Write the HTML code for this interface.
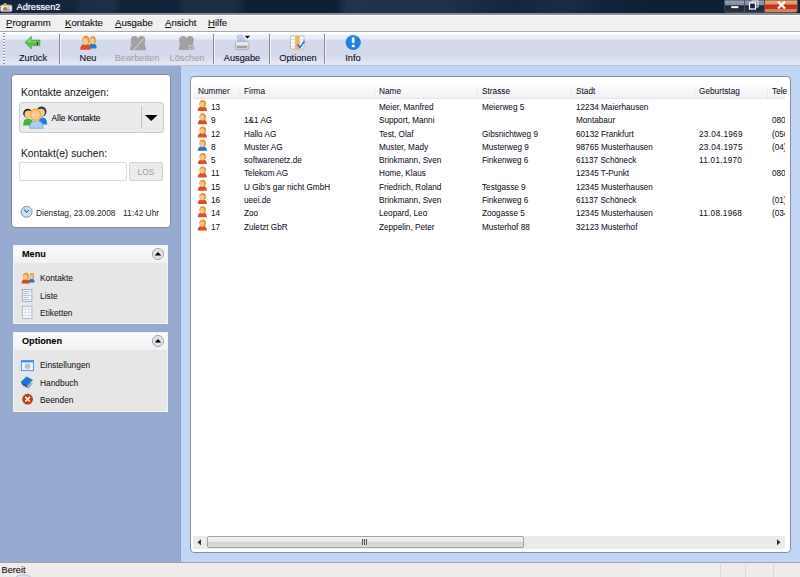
<!DOCTYPE html>
<html><head><meta charset="utf-8">
<style>
*{margin:0;padding:0;box-sizing:border-box}
html,body{width:800px;height:577px;overflow:hidden;background:#97abd0;font-family:"Liberation Sans",sans-serif;color:#000;position:relative}
.a{position:absolute;white-space:nowrap;-webkit-text-stroke-width:0.12px}
svg.a{overflow:visible}
.t{transform-origin:0 0}
#title{left:0;top:0;width:800px;height:13px;background:linear-gradient(96deg,#13233a 0px,#14243b 75px,#1d2d45 82px,#1f2f47 112px,#13233a 122px,#12223a 176px,#1d2d43 184px,#1c2c42 236px,#0f1f36 246px,#0f1f36 334px,#23334b 346px,#20304a 450px,#1b2b43 470px,#15253d 515px,#1c2c44 560px,#13233b 600px,#0f1f36 650px,#0f1f36 800px)}
.mi{font-size:9.6px;color:#141414}
.mi u{text-decoration:underline;text-underline-offset:0.5px}
.tt{font-size:9.6px;color:#10101e;transform:scaleX(0.96);transform-origin:50% 0}
.dis{color:#a6a6a8}
.sep{top:34px;width:2px;height:30px;border-left:1px solid #868a96;border-right:1px solid #f2f4f9}
.lbl{font-size:10.25px;color:#1a1a1a;-webkit-text-stroke-width:0.05px}
.sbt{font-size:9.8px;font-weight:bold;color:#000;transform:scaleX(0.93);transform-origin:0 0;-webkit-text-stroke-width:0.1px}
.si{font-size:8.8px;color:#141414;-webkit-text-stroke-width:0.05px;transform:scaleX(0.95);transform-origin:0 0}
.hd{font-size:8.9px;color:#10101e;-webkit-text-stroke-width:0.05px}
.cell{font-size:8.8px;color:#10101e;-webkit-text-stroke-width:0.05px}
</style></head><body>
<div id="title" class="a"></div>
<div class="a" style="left:0;top:13px;width:800px;height:2px;background:#8a8e94"></div>
<svg class="a" style="left:0;top:2px" width="13" height="10" viewBox="0 0 13 10"><rect x="0.4" y="3" width="11.6" height="6.6" rx="1.5" fill="#d8d8dc" stroke="#a4a4aa" stroke-width="0.7"/><rect x="1.5" y="4" width="9.4" height="4.6" fill="#ececf0"/><circle cx="5.2" cy="2.6" r="1.7" fill="#e8a848"/><path d="M3 8.5 Q3 5 5.2 5 Q7.4 5 7.4 8.5 Z" fill="#c06a38"/><circle cx="8.5" cy="4.8" r="1.3" fill="#f0c070"/><path d="M7 8.6 Q7 6.4 8.5 6.4 Q10 6.4 10 8.6 Z" fill="#6a98d0"/><circle cx="5.6" cy="5.8" r="0.8" fill="#40a840"/></svg>
<div class="a" style="left:16.5px;top:2px;font-size:9.2px;color:#fff;text-shadow:0 0 2px rgba(170,200,255,.5)">Adressen2</div>
<svg class="a" style="left:724px;top:0" width="76" height="14" viewBox="0 0 76 14">
<defs><linearGradient id="gmin" x1="0" y1="0" x2="0" y2="1"><stop offset="0" stop-color="#9aa4b4"/><stop offset="0.42" stop-color="#7e8a9c"/><stop offset="0.45" stop-color="#1c2638"/><stop offset="1" stop-color="#283448"/></linearGradient>
<linearGradient id="gcls" x1="0" y1="0" x2="0" y2="1"><stop offset="0" stop-color="#e8b088"/><stop offset="0.35" stop-color="#d89060"/><stop offset="0.38" stop-color="#c42c1c"/><stop offset="0.72" stop-color="#c83420"/><stop offset="0.76" stop-color="#d08058"/><stop offset="1" stop-color="#c88a70"/></linearGradient></defs>
<path d="M0.5 0 V10 Q0.5 12.5 3 12.5 H40.5 V0 Z" fill="url(#gmin)" stroke="#3c4658" stroke-width="1"/>
<line x1="20.5" y1="0" x2="20.5" y2="12" stroke="#4a5466" stroke-width="1"/>
<path d="M40.5 0 V12.5 H71 Q73.5 12.5 73.5 10 V0 Z" fill="url(#gcls)" stroke="#6a4a40" stroke-width="1"/>
<rect x="7" y="6" width="7.5" height="2.2" fill="#fff" stroke="#30384a" stroke-width="0.4"/>
<rect x="28" y="1" width="6" height="6" fill="none" stroke="#e8ecf4" stroke-width="1"/>
<rect x="25.5" y="3" width="6" height="6" fill="#1c2638" stroke="#fff" stroke-width="1.2"/>
<path d="M54 1.5 L61 8.5 M61 1.5 L54 8.5" stroke="#fff" stroke-width="2.2"/>
</svg>
<div class="a" style="left:0;top:15px;width:800px;height:1px;background:#fdfdfd"></div>
<div class="a" style="left:0;top:16px;width:800px;height:15px;background:#f0f0f0"></div>
<div class="a" style="left:0;top:31px;width:800px;height:1px;background:#a8aaac"></div>
<div class="a mi" style="left:6px;top:16.6px"><u>P</u>rogramm</div>
<div class="a mi" style="left:65px;top:16.6px"><u>K</u>ontakte</div>
<div class="a mi" style="left:115px;top:16.6px"><u>A</u>usgabe</div>
<div class="a mi" style="left:165px;top:16.6px"><u>A</u>nsicht</div>
<div class="a mi" style="left:208px;top:16.6px"><u>H</u>ilfe</div>
<div class="a" style="left:0;top:32px;width:800px;height:34px;background:linear-gradient(#ffffff 0px,#fdfdfe 2px,#ecf1f9 3px,#e6ecf7 6.8px,#d4d9ec 8.5px,#d3d8eb 23px,#dde1f0 28px,#e4e7f3 32px)"></div>
<div class="a" style="left:0;top:65px;width:800px;height:1px;background:#bfc6da"></div>
<div class="a" style="left:3px;top:33px;width:2px;height:31px;background:repeating-linear-gradient(#8a92a6 0 1px,#fff 1px 2px,transparent 2px 3px)"></div>
<div class="a sep" style="left:59px"></div>
<div class="a sep" style="left:213px"></div>
<div class="a sep" style="left:269px"></div>
<div class="a sep" style="left:324px"></div>
<svg class="a" style="left:24px;top:35px" width="17" height="15" viewBox="24 35 17 15"><path d="M24.9 42.4 L31.4 36.2 L31.4 40 L39.9 40 L39.9 45.7 L31.4 45.7 L31.4 49 Z" fill="#58be4c" stroke="#3c9a34" stroke-width="0.5"/><path d="M26.5 42.2 L31 38 L31 41 L36 41 L36 42.6 Z" fill="#8ed882" opacity="0.7"/><rect x="36.8" y="42.6" width="1.2" height="2.2" fill="#201818"/></svg>
<svg class="a" style="left:0;top:0" width="800" height="577" viewBox="0 0 800 577"><path d="M88.50 47.90 C88.50 45.43 90.28 42.97 92.55 42.97 C94.82 42.97 96.60 45.43 96.60 47.90 Q96.60 48.50 95.80 48.50 H89.30 Q88.50 48.50 88.50 47.90 Z" fill="#1c7ad6"/><ellipse cx="92.87" cy="40.26" rx="2.92" ry="4.06" fill="#e09a2c"/><ellipse cx="92.39" cy="41.15" rx="2.04" ry="3.04" fill="#f8c68a"/><path d="M80.20 49.10 C80.20 46.23 82.53 43.45 85.50 43.45 C88.47 43.45 90.80 46.23 90.80 49.10 Q90.80 49.70 90.00 49.70 H81.00 Q80.20 49.70 80.20 49.10 Z" fill="#dc5028"/><ellipse cx="85.92" cy="40.39" rx="3.82" ry="4.59" fill="#e09a2c"/><ellipse cx="85.29" cy="41.40" rx="2.67" ry="3.44" fill="#f8c68a"/><g fill="#a2a2a4"><circle cx="134.5" cy="39.5" r="3.6"/><circle cx="141.5" cy="39.5" r="3.4"/><path d="M130 50.2 Q130 43 134.5 43 Q138 43 138 44 Q138 43 141.5 43 Q146 43 146 50.2 Z"/><rect x="131" y="38" width="14" height="6"/></g><path d="M133.5 50 L143.5 39" stroke="#d4d8e4" stroke-width="1"/><g fill="#a2a2a4"><circle cx="183" cy="39.5" r="3.6"/><circle cx="190" cy="39.5" r="3.4"/><path d="M178.7 50 Q178.7 43 183 43 Q187 43 187 44 Q187 43 190 43 Q194.5 43 194.5 50 Z"/><rect x="179.5" y="38" width="14" height="6"/></g><path d="M189 45 L194 50 M194 45 L189 50" stroke="#d6dae6" stroke-width="1.6"/><path d="M189.5 45.5 L193.5 49.5 M193.5 45.5 L189.5 49.5" stroke="#8a8a8c" stroke-width="0.8"/><path d="M236.8 36.2 L241.8 35.2 L244.6 40.6 L239.2 41.2 Z" fill="#d4e4f8" stroke="#7ea8dc" stroke-width="0.7"/><path d="M238.5 37.5 L241.5 37 L243 40 L240 40.3 Z" fill="#a8c8f0"/><path d="M235.4 44 Q235.4 41 238.5 41 H246 Q249 41 249 44 V47.5 Q249 49.7 246.5 49.7 H238 Q235.4 49.7 235.4 47.5 Z" fill="#d0d0d2" stroke="#9a9a9c" stroke-width="0.6"/><path d="M236 42.5 H248.4 V44.6 H236 Z" fill="#eeeeee"/><rect x="237" y="46.4" width="10" height="1.3" fill="#8a8a8e"/><path d="M244.7 35.8 H250.1 L247.4 38.6 Z" fill="#000"/><rect x="290.5" y="36" width="13.5" height="13" fill="#fbfbfb" stroke="#a8a8a8" stroke-width="0.7"/><rect x="295.2" y="36" width="4.7" height="13.2" fill="#f6b050"/><path d="M290.5 39.5 H304 M290.5 43 H304 M290.5 46.5 H304 M295 36 V49 M299.5 36 V49" stroke="#c8c8c8" stroke-width="0.5"/><path d="M297.5 44.5 L300 47.5 L304.5 41" stroke="#2a78d0" stroke-width="1.5" fill="none"/><circle cx="353.2" cy="42.5" r="7.6" fill="#1e80dc"/><path d="M349 36.5 Q353 35 357.5 36.5" stroke="#6cb0f0" stroke-width="1" fill="none" opacity="0.6"/><rect x="351.8" y="37.5" width="2.8" height="5.5" fill="#fff"/><rect x="351.8" y="44.8" width="2.8" height="2.4" fill="#fff"/></svg>
<div class="a tt" style="left:-7.399999999999999px;width:80px;text-align:center;top:52px">Zurück</div>
<div class="a tt" style="left:48.099999999999994px;width:80px;text-align:center;top:52px">Neu</div>
<div class="a tt dis" style="left:97px;width:80px;text-align:center;top:52px">Bearbeiten</div>
<div class="a tt dis" style="left:146.5px;width:80px;text-align:center;top:52px">Löschen</div>
<div class="a tt" style="left:202.3px;width:80px;text-align:center;top:52px">Ausgabe</div>
<div class="a tt" style="left:257.6px;width:80px;text-align:center;top:52px">Optionen</div>
<div class="a tt" style="left:312.8px;width:80px;text-align:center;top:52px">Info</div>
<div class="a" style="left:180px;top:66px;width:1px;height:496px;background:#8ea4cc"></div>
<div class="a" style="left:181px;top:66px;width:619px;height:496px;background:#c1d5f5"></div>
<div class="a" style="left:11px;top:74px;width:160px;height:154px;background:#fff;border:1px solid #888c92;border-radius:4px"></div>
<div class="a lbl" style="left:21px;top:86.5px">Kontakte anzeigen:</div>
<div class="a" style="left:19px;top:102px;width:144.5px;height:30.5px;background:#ebebeb;border:1px solid #cdcdcd;border-radius:3px"></div>
<div class="a" style="left:140.5px;top:106px;width:1px;height:23px;background:#c4c4c4"></div>
<svg class="a" style="left:145px;top:115px" width="13" height="6" viewBox="0 0 13 6"><path d="M0 0 H12.5 L6.25 6 Z" fill="#000"/></svg>
<div class="a" style="left:51.5px;top:113px;font-size:8.3px;color:#10101e">Alle Kontakte</div>
<div class="a lbl" style="left:21px;top:148px">Kontakt(e) suchen:</div>
<div class="a" style="left:19px;top:162px;width:108px;height:18.5px;background:#fff;border:1px solid #dcdcdc;border-radius:2px"></div>
<div class="a" style="left:129px;top:162px;width:34px;height:18.5px;background:#ebebeb;border:1px solid #d4d4d4;border-radius:2px"></div>
<div class="a" style="left:129px;top:166.6px;width:34px;text-align:center;font-size:8.4px;color:#a0a0a0;-webkit-text-stroke-width:0.03px">LOS</div>
<div class="a" style="left:35.5px;top:208.1px;font-size:9.2px;color:#262626;-webkit-text-stroke-width:0.03px;transform:scaleX(0.91);transform-origin:0 0">Dienstag, 23.09.2008</div>
<div class="a" style="left:122.5px;top:208.1px;font-size:9.2px;color:#262626;-webkit-text-stroke-width:0.03px;transform:scaleX(0.91);transform-origin:0 0">11:42 Uhr</div>
<div class="a" style="left:12.5px;top:244.5px;width:155.5px;height:79.5px;background:#e6e6e6;border:1px solid #f2f2f2"></div>
<div class="a" style="left:13.5px;top:245.5px;width:153.5px;height:17.2px;background:linear-gradient(#fbfbfb,#f1f1f1)"></div>
<div class="a sbt" style="left:21.7px;top:248.1px">Menu</div>
<svg class="a" style="left:151.5px;top:248.0px" width="12" height="12" viewBox="0 0 12 12"><circle cx="6" cy="6" r="5.6" fill="#dfe2e8" stroke="#8f97a6" stroke-width="0.8"/><path d="M2.8 7.6 L6 4 L9.2 7.6 Z" fill="#000"/></svg>
<div class="a si" style="left:40px;top:273.3px">Kontakte</div>
<div class="a si" style="left:40px;top:290.6px">Liste</div>
<div class="a si" style="left:40px;top:307.90000000000003px">Etiketten</div>
<div class="a" style="left:12.5px;top:331.5px;width:155.5px;height:80.5px;background:#e6e6e6;border:1px solid #f2f2f2"></div>
<div class="a" style="left:13.5px;top:332.5px;width:153.5px;height:17.2px;background:linear-gradient(#fbfbfb,#f1f1f1)"></div>
<div class="a sbt" style="left:21.7px;top:335.1px">Optionen</div>
<svg class="a" style="left:151.5px;top:335.0px" width="12" height="12" viewBox="0 0 12 12"><circle cx="6" cy="6" r="5.6" fill="#dfe2e8" stroke="#8f97a6" stroke-width="0.8"/><path d="M2.8 7.6 L6 4 L9.2 7.6 Z" fill="#000"/></svg>
<div class="a si" style="left:40px;top:360.3px">Einstellungen</div>
<div class="a si" style="left:40px;top:377.6px">Handbuch</div>
<div class="a si" style="left:40px;top:394.90000000000003px">Beenden</div>
<div class="a" style="left:190px;top:76px;width:601px;height:477px;background:#fff;border:1px solid #8a8e96;border-radius:4px"></div>
<div class="a" style="left:193px;top:81px;width:592px;height:17.5px;background:linear-gradient(#ffffff 0%,#fbfbfc 40%,#f1f2f4 100%);border-bottom:1px solid #e3e5e8"></div>
<div class="a" style="left:238px;top:81px;width:1px;height:17px;background:linear-gradient(#ffffff,#dfe1e5)"></div>
<div class="a" style="left:373.5px;top:81px;width:1px;height:17px;background:linear-gradient(#ffffff,#dfe1e5)"></div>
<div class="a" style="left:477px;top:81px;width:1px;height:17px;background:linear-gradient(#ffffff,#dfe1e5)"></div>
<div class="a" style="left:570.5px;top:81px;width:1px;height:17px;background:linear-gradient(#ffffff,#dfe1e5)"></div>
<div class="a" style="left:694px;top:81px;width:1px;height:17px;background:linear-gradient(#ffffff,#dfe1e5)"></div>
<div class="a" style="left:767px;top:81px;width:1px;height:17px;background:linear-gradient(#ffffff,#dfe1e5)"></div>
<div class="a hd t" style="left:197.5px;top:85.9px;transform:scaleX(0.93)">Nummer</div>
<div class="a hd t" style="left:243.5px;top:85.9px;transform:scaleX(0.93)">Firma</div>
<div class="a hd t" style="left:378.5px;top:85.9px;transform:scaleX(0.93)">Name</div>
<div class="a hd t" style="left:481.5px;top:85.9px;transform:scaleX(0.93)">Strasse</div>
<div class="a hd t" style="left:575.5px;top:85.9px;transform:scaleX(0.93)">Stadt</div>
<div class="a hd t" style="left:698.5px;top:85.9px;transform:scaleX(0.93)">Geburtstag</div>
<div class="a hd t" style="left:771.5px;top:85.9px;transform:scaleX(0.93)">Tele</div>
<div class="a" style="left:193px;top:99px;width:592px;height:140px;overflow:hidden">
<div class="a cell t" style="left:17.5px;top:3.00px;transform:scaleX(0.93)">13</div>
<div class="a cell t" style="left:185.5px;top:3.00px;transform:scaleX(0.93)">Meier, Manfred</div>
<div class="a cell t" style="left:288.5px;top:3.00px;transform:scaleX(0.93)">Meierweg 5</div>
<div class="a cell t" style="left:382.5px;top:3.00px;transform:scaleX(0.93)">12234 Maierhausen</div>
<div class="a cell t" style="left:17.5px;top:16.28px;transform:scaleX(0.93)">9</div>
<div class="a cell t" style="left:50.5px;top:16.28px;transform:scaleX(0.93)">1&amp;1 AG</div>
<div class="a cell t" style="left:185.5px;top:16.28px;transform:scaleX(0.93)">Support, Manni</div>
<div class="a cell t" style="left:382.5px;top:16.28px;transform:scaleX(0.93)">Montabaur</div>
<div class="a cell t" style="left:578.5px;top:16.28px;transform:scaleX(0.93)">0800 12345</div>
<div class="a cell t" style="left:17.5px;top:29.56px;transform:scaleX(0.93)">12</div>
<div class="a cell t" style="left:50.5px;top:29.56px;transform:scaleX(0.93)">Hallo AG</div>
<div class="a cell t" style="left:185.5px;top:29.56px;transform:scaleX(0.93)">Test, Olaf</div>
<div class="a cell t" style="left:288.5px;top:29.56px;transform:scaleX(0.93)">Gibsnichtweg 9</div>
<div class="a cell t" style="left:382.5px;top:29.56px;transform:scaleX(0.93)">60132 Frankfurt</div>
<div class="a cell t" style="left:505.5px;top:29.56px;letter-spacing:0.3px;transform:scaleX(0.93)">23.04.1969</div>
<div class="a cell t" style="left:578.5px;top:29.56px;transform:scaleX(0.93)">(0561) 1234</div>
<div class="a cell t" style="left:17.5px;top:42.84px;transform:scaleX(0.93)">8</div>
<div class="a cell t" style="left:50.5px;top:42.84px;transform:scaleX(0.93)">Muster AG</div>
<div class="a cell t" style="left:185.5px;top:42.84px;transform:scaleX(0.93)">Muster, Mady</div>
<div class="a cell t" style="left:288.5px;top:42.84px;transform:scaleX(0.93)">Musterweg 9</div>
<div class="a cell t" style="left:382.5px;top:42.84px;transform:scaleX(0.93)">98765 Musterhausen</div>
<div class="a cell t" style="left:505.5px;top:42.84px;letter-spacing:0.3px;transform:scaleX(0.93)">23.04.1975</div>
<div class="a cell t" style="left:578.5px;top:42.84px;transform:scaleX(0.93)">(04) 12345</div>
<div class="a cell t" style="left:17.5px;top:56.12px;transform:scaleX(0.93)">5</div>
<div class="a cell t" style="left:50.5px;top:56.12px;transform:scaleX(0.93)">softwarenetz.de</div>
<div class="a cell t" style="left:185.5px;top:56.12px;transform:scaleX(0.93)">Brinkmann, Sven</div>
<div class="a cell t" style="left:288.5px;top:56.12px;transform:scaleX(0.93)">Finkenweg 6</div>
<div class="a cell t" style="left:382.5px;top:56.12px;transform:scaleX(0.93)">61137 Schöneck</div>
<div class="a cell t" style="left:505.5px;top:56.12px;letter-spacing:0.3px;transform:scaleX(0.93)">11.01.1970</div>
<div class="a cell t" style="left:17.5px;top:69.40px;transform:scaleX(0.93)">11</div>
<div class="a cell t" style="left:50.5px;top:69.40px;transform:scaleX(0.93)">Telekom AG</div>
<div class="a cell t" style="left:185.5px;top:69.40px;transform:scaleX(0.93)">Home, Klaus</div>
<div class="a cell t" style="left:382.5px;top:69.40px;transform:scaleX(0.93)">12345 T-Punkt</div>
<div class="a cell t" style="left:578.5px;top:69.40px;transform:scaleX(0.93)">0800 33000</div>
<div class="a cell t" style="left:17.5px;top:82.68px;transform:scaleX(0.93)">15</div>
<div class="a cell t" style="left:50.5px;top:82.68px;transform:scaleX(0.93)">U Gib&#39;s gar nicht GmbH</div>
<div class="a cell t" style="left:185.5px;top:82.68px;transform:scaleX(0.93)">Friedrich, Roland</div>
<div class="a cell t" style="left:288.5px;top:82.68px;transform:scaleX(0.93)">Testgasse 9</div>
<div class="a cell t" style="left:382.5px;top:82.68px;transform:scaleX(0.93)">12345 Musterhausen</div>
<div class="a cell t" style="left:17.5px;top:95.96px;transform:scaleX(0.93)">16</div>
<div class="a cell t" style="left:50.5px;top:95.96px;transform:scaleX(0.93)">ueei.de</div>
<div class="a cell t" style="left:185.5px;top:95.96px;transform:scaleX(0.93)">Brinkmann, Sven</div>
<div class="a cell t" style="left:288.5px;top:95.96px;transform:scaleX(0.93)">Finkenweg 6</div>
<div class="a cell t" style="left:382.5px;top:95.96px;transform:scaleX(0.93)">61137 Schöneck</div>
<div class="a cell t" style="left:578.5px;top:95.96px;transform:scaleX(0.93)">(01) 1234</div>
<div class="a cell t" style="left:17.5px;top:109.24px;transform:scaleX(0.93)">14</div>
<div class="a cell t" style="left:50.5px;top:109.24px;transform:scaleX(0.93)">Zoo</div>
<div class="a cell t" style="left:185.5px;top:109.24px;transform:scaleX(0.93)">Leopard, Leo</div>
<div class="a cell t" style="left:288.5px;top:109.24px;transform:scaleX(0.93)">Zoogasse 5</div>
<div class="a cell t" style="left:382.5px;top:109.24px;transform:scaleX(0.93)">12345 Musterhausen</div>
<div class="a cell t" style="left:505.5px;top:109.24px;letter-spacing:0.3px;transform:scaleX(0.93)">11.08.1968</div>
<div class="a cell t" style="left:578.5px;top:109.24px;transform:scaleX(0.93)">(0345) 678</div>
<div class="a cell t" style="left:17.5px;top:122.52px;transform:scaleX(0.93)">17</div>
<div class="a cell t" style="left:50.5px;top:122.52px;transform:scaleX(0.93)">Zuletzt GbR</div>
<div class="a cell t" style="left:185.5px;top:122.52px;transform:scaleX(0.93)">Zeppelin, Peter</div>
<div class="a cell t" style="left:288.5px;top:122.52px;transform:scaleX(0.93)">Musterhof 88</div>
<div class="a cell t" style="left:382.5px;top:122.52px;transform:scaleX(0.93)">32123 Musterhof</div>
</div>
<svg class="a" style="left:0;top:0" width="800" height="577" viewBox="0 0 800 577"><path d="M197.80 110.40 C197.80 108.25 199.80 106.05 202.35 106.05 C204.90 106.05 206.90 108.25 206.90 110.40 Q206.90 111.00 206.10 111.00 H198.60 Q197.80 111.00 197.80 110.40 Z" fill="#dc5028"/><ellipse cx="202.71" cy="103.63" rx="3.28" ry="3.63" fill="#e09a2c"/><ellipse cx="202.17" cy="104.43" rx="2.29" ry="2.72" fill="#f8c68a"/><path d="M197.80 123.68 C197.80 121.53 199.80 119.33 202.35 119.33 C204.90 119.33 206.90 121.53 206.90 123.68 Q206.90 124.28 206.10 124.28 H198.60 Q197.80 124.28 197.80 123.68 Z" fill="#dc5028"/><ellipse cx="202.71" cy="116.91" rx="3.28" ry="3.63" fill="#e09a2c"/><ellipse cx="202.17" cy="117.71" rx="2.29" ry="2.72" fill="#f8c68a"/><path d="M197.80 136.96 C197.80 134.81 199.80 132.61 202.35 132.61 C204.90 132.61 206.90 134.81 206.90 136.96 Q206.90 137.56 206.10 137.56 H198.60 Q197.80 137.56 197.80 136.96 Z" fill="#dc5028"/><ellipse cx="202.71" cy="130.19" rx="3.28" ry="3.63" fill="#e09a2c"/><ellipse cx="202.17" cy="130.99" rx="2.29" ry="2.72" fill="#f8c68a"/><path d="M197.80 150.24 C197.80 148.09 199.80 145.89 202.35 145.89 C204.90 145.89 206.90 148.09 206.90 150.24 Q206.90 150.84 206.10 150.84 H198.60 Q197.80 150.84 197.80 150.24 Z" fill="#1c7ad6"/><ellipse cx="202.71" cy="143.47" rx="3.28" ry="3.63" fill="#e09a2c"/><ellipse cx="202.17" cy="144.27" rx="2.29" ry="2.72" fill="#f8c68a"/><path d="M197.80 163.52 C197.80 161.37 199.80 159.17 202.35 159.17 C204.90 159.17 206.90 161.37 206.90 163.52 Q206.90 164.12 206.10 164.12 H198.60 Q197.80 164.12 197.80 163.52 Z" fill="#dc5028"/><ellipse cx="202.71" cy="156.75" rx="3.28" ry="3.63" fill="#e09a2c"/><ellipse cx="202.17" cy="157.55" rx="2.29" ry="2.72" fill="#f8c68a"/><path d="M197.80 176.80 C197.80 174.65 199.80 172.45 202.35 172.45 C204.90 172.45 206.90 174.65 206.90 176.80 Q206.90 177.40 206.10 177.40 H198.60 Q197.80 177.40 197.80 176.80 Z" fill="#dc5028"/><ellipse cx="202.71" cy="170.03" rx="3.28" ry="3.63" fill="#e09a2c"/><ellipse cx="202.17" cy="170.83" rx="2.29" ry="2.72" fill="#f8c68a"/><path d="M197.80 190.08 C197.80 187.93 199.80 185.73 202.35 185.73 C204.90 185.73 206.90 187.93 206.90 190.08 Q206.90 190.68 206.10 190.68 H198.60 Q197.80 190.68 197.80 190.08 Z" fill="#dc5028"/><ellipse cx="202.71" cy="183.31" rx="3.28" ry="3.63" fill="#e09a2c"/><ellipse cx="202.17" cy="184.11" rx="2.29" ry="2.72" fill="#f8c68a"/><path d="M197.80 203.36 C197.80 201.21 199.80 199.01 202.35 199.01 C204.90 199.01 206.90 201.21 206.90 203.36 Q206.90 203.96 206.10 203.96 H198.60 Q197.80 203.96 197.80 203.36 Z" fill="#dc5028"/><ellipse cx="202.71" cy="196.59" rx="3.28" ry="3.63" fill="#e09a2c"/><ellipse cx="202.17" cy="197.39" rx="2.29" ry="2.72" fill="#f8c68a"/><path d="M197.80 216.64 C197.80 214.49 199.80 212.29 202.35 212.29 C204.90 212.29 206.90 214.49 206.90 216.64 Q206.90 217.24 206.10 217.24 H198.60 Q197.80 217.24 197.80 216.64 Z" fill="#dc5028"/><ellipse cx="202.71" cy="209.87" rx="3.28" ry="3.63" fill="#e09a2c"/><ellipse cx="202.17" cy="210.67" rx="2.29" ry="2.72" fill="#f8c68a"/><path d="M197.80 229.92 C197.80 227.77 199.80 225.57 202.35 225.57 C204.90 225.57 206.90 227.77 206.90 229.92 Q206.90 230.52 206.10 230.52 H198.60 Q197.80 230.52 197.80 229.92 Z" fill="#dc5028"/><ellipse cx="202.71" cy="223.15" rx="3.28" ry="3.63" fill="#e09a2c"/><ellipse cx="202.17" cy="223.95" rx="2.29" ry="2.72" fill="#f8c68a"/></svg>
<div class="a" style="left:193px;top:536px;width:592px;height:12.5px;background:#ebebeb"></div>
<div class="a" style="left:207px;top:536.3px;width:316.5px;height:11.4px;border:1px solid #a2a2a2;border-radius:2px;background:linear-gradient(#f4f4f4 0%,#e8e8e8 45%,#d4d4d4 55%,#dadada 100%)"></div>
<div class="a" style="left:362px;top:539px;width:6px;height:5.5px;background:repeating-linear-gradient(90deg,#555 0 1px,#e0e0e0 1px 2px)"></div>
<svg class="a" style="left:0;top:0" width="800" height="577" viewBox="0 0 800 577"><path d="M197.5 542.3 L201 539.3 V545.3 Z" fill="#303030"/><path d="M780.5 542.3 L777 539.3 V545.3 Z" fill="#303030"/></svg>
<svg class="a" style="left:0;top:0" width="800" height="577" viewBox="0 0 800 577"><path d="M23 125.5 Q23 118.5 28 118.5 Q33.5 118.5 33.5 125.5 Z" fill="#4cb040"/><circle cx="27.8" cy="113.3" r="4.6" fill="#2a2a2e"/><circle cx="28.3" cy="114.2" r="3.7" fill="#f8c890"/><path d="M38.5 124.5 Q38.5 117.5 42.5 117.5 Q47.2 117.5 47.2 124.5 Z" fill="#2080d8"/><circle cx="41.5" cy="111.6" r="5" fill="#3a3a3e"/><circle cx="41" cy="112.6" r="3.9" fill="#f8c890"/><path d="M29.5 128.3 Q29.5 120.5 36 120.5 Q43.3 120.5 43.3 128.3 Z" fill="#a8cef0" stroke="#5a9ad8" stroke-width="0.6"/><ellipse cx="35.6" cy="114.6" rx="5.8" ry="6.3" fill="#f4b050"/><ellipse cx="35.6" cy="115.2" rx="4.2" ry="4.8" fill="#f8c888"/><path d="M32.2 115 H34.6 M36.6 115 H39" stroke="#fff4e0" stroke-width="1.2"/><circle cx="26.6" cy="211.8" r="5.5" fill="#c6e0f8" stroke="#7c8494" stroke-width="0.9"/><path d="M24.3 209.5 L26.5 212.3 L28.8 210.2" stroke="#2a2e3a" stroke-width="1" fill="none"/><path d="M28.60 282.00 C28.60 280.20 29.92 278.28 31.60 278.28 C33.28 278.28 34.60 280.20 34.60 282.00 Q34.60 282.60 33.80 282.60 H29.40 Q28.60 282.60 28.60 282.00 Z" fill="#1c7ad6"/><ellipse cx="31.84" cy="276.17" rx="2.16" ry="3.17" fill="#e09a2c"/><ellipse cx="31.48" cy="276.86" rx="1.51" ry="2.38" fill="#f8c68a"/><path d="M21.50 283.00 C21.50 280.88 23.33 278.69 25.65 278.69 C27.97 278.69 29.80 280.88 29.80 283.00 Q29.80 283.60 29.00 283.60 H22.30 Q21.50 283.60 21.50 283.00 Z" fill="#d44a24"/><ellipse cx="25.98" cy="276.30" rx="2.99" ry="3.60" fill="#e09a2c"/><ellipse cx="25.48" cy="277.09" rx="2.09" ry="2.70" fill="#f8c68a"/><rect x="22.3" y="289.3" width="9.6" height="12" fill="#f2f5fa" stroke="#8c96a4" stroke-width="0.7"/><path d="M23.5 291.5 H30.5 M23.5 293.5 H29 M23.5 295.5 H30.5 M23.5 297.5 H28.5 M23.5 299.5 H30" stroke="#90a8d0" stroke-width="0.7"/><rect x="22.3" y="306.2" width="9.6" height="12.4" fill="#fdfdfd" stroke="#9aa2ae" stroke-width="0.7"/><path d="M25.5 306.2 V318.6 M28.7 306.2 V318.6 M22.3 309.3 H31.9 M22.3 312.4 H31.9 M22.3 315.5 H31.9" stroke="#c4cede" stroke-width="0.6"/><rect x="21.4" y="360.6" width="12.2" height="10" fill="#eef3fb" stroke="#3c8ee8" stroke-width="0.9"/><rect x="21.4" y="360.6" width="12.2" height="1.8" fill="#3c8ee8"/><circle cx="27.5" cy="366.3" r="2.8" fill="#b8c0cc"/><path d="M22.5 386 L28.5 388.8 L33 383.5 L27 381 Z" fill="#a8acb4"/><path d="M21 382 L26.5 376.8 L32.5 380 L27 385.5 Z" fill="#1c78d8" stroke="#1060b8" stroke-width="0.5"/><path d="M21 382 L27 385.5 L27.8 387.5 L22 384.5 Z" fill="#0c58b0"/><circle cx="27.6" cy="399.2" r="5.4" fill="#c43c18"/><path d="M25.3 396.9 L29.9 401.5 M29.9 396.9 L25.3 401.5" stroke="#fff" stroke-width="1.6"/></svg>
<div class="a" style="left:0;top:562px;width:800px;height:1px;background:#a0a4aa"></div>
<div class="a" style="left:0;top:563px;width:800px;height:14px;background:#efebea"></div>
<div class="a" style="left:638.5px;top:563px;width:81.5px;height:14px;background:#eeeeee"></div>
<div class="a" style="left:720px;top:564px;width:1px;height:13px;background:#d8d8d8"></div>
<div class="a" style="left:744.5px;top:564px;width:1px;height:13px;background:#d8d8d8"></div>
<div class="a" style="left:772.5px;top:564px;width:1px;height:13px;background:#d8d8d8"></div>
<div class="a" style="left:1.5px;top:564.8px;font-size:9.2px;color:#141414">Bereit</div>
<svg class="a" style="left:0;top:560px" width="60" height="17" viewBox="0 560 60 17"><ellipse cx="23.3" cy="580.5" rx="9.3" ry="5.8" fill="#dce4f0" stroke="#aab8cc" stroke-width="0.8"/></svg>
</body></html>
